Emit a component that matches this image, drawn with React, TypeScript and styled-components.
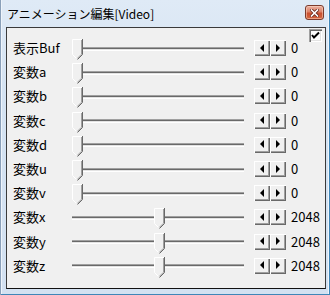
import React from "react";
import styled, { createGlobalStyle } from "styled-components";

const GlobalStyle = createGlobalStyle`
  html, body { margin: 0; padding: 0; background: #ffffff; }
  body { font-family: "Noto Sans CJK JP", "Noto Sans", sans-serif; }
  * { box-sizing: border-box; }
`;

const Window = styled.div`
  width: 330px;
  height: 295px;
  display: flex;
  flex-direction: column;
  background: linear-gradient(#dfeaf6, #d5e3f2 30%, #d3e1f1);
  box-shadow: inset 1px 0 0 #8aa0b9, inset -1px 0 0 #3f86b8, inset 0 -1px 0 #3f86b8,
    inset 2px 0 0 #eef4fb, inset -2px 0 0 #eef4fb;
`;

const TitleBar = styled.div`
  height: 27px;
  flex: none;
  display: flex;
  align-items: flex-start;
  justify-content: space-between;
  padding: 0 6px 0 7px;
`;

const Title = styled.span`
  font-size: 12px;
  line-height: 16px;
  margin-top: 6px;
  color: #000;
  white-space: nowrap;
`;

const CloseButton = styled.div`
  width: 19px;
  height: 15px;
  margin-top: 5px;
  border: 1px solid #7b3a2c;
  border-radius: 3px;
  background: linear-gradient(#eab0a2, #dc8268 45%, #c94f30 55%, #d5663f);
  box-shadow: inset 0 0 0 1px rgba(255, 220, 200, 0.5);
  display: flex;
  align-items: center;
  justify-content: center;
`;

const Client = styled.div`
  position: relative;
  height: 262px;
  margin: 0 4px 6px 6px;
  border: 1px solid #3a3a3a;
  border-bottom-color: #111;
  background: #f0f0f0;
  padding: 8px 0 0 6px;
  display: flex;
  flex-direction: column;
`;

const CheckBox = styled.div`
  position: absolute;
  top: 1px;
  right: 3px;
  width: 13px;
  height: 13px;
  background: #fff;
  box-shadow: inset 1px 1px 0 #a0a0a0, inset 2px 2px 0 #696969,
    inset -1px -1px 0 #ffffff, inset -2px -2px 0 #e3e3e3;
  display: flex;
  align-items: center;
  justify-content: center;
`;

const Row = styled.div`
  height: 24.2px;
  flex: none;
  display: flex;
  align-items: center;
`;

const Label = styled.span`
  width: 59px;
  flex: none;
  font-size: 13px;
  line-height: 16px;
  color: #000;
  white-space: nowrap;
`;

const Slider = styled.div`
  position: relative;
  width: 172px;
  height: 100%;
  flex: none;
  display: flex;
  align-items: center;
  padding-top: 1px;
`;

const Track = styled.div`
  width: 100%;
  height: 4px;
  border-top: 1px solid #a0a0a0;
  border-bottom: 1px solid #ffffff;
  background: linear-gradient(#696969 50%, #e3e3e3 50%);
`;

const ThumbBox = styled.div`
  position: absolute;
  top: 3px;
  width: 11px;
  height: 21px;
`;

const Spin = styled.div`
  display: flex;
  height: 16px;
  margin-left: 10px;
  flex: none;
`;

const SpinButton = styled.div`
  width: 16px;
  height: 16px;
  background: #f0f0f0;
  box-shadow: inset 1px 1px 0 #ffffff, inset -1px -1px 0 #696969, inset -2px -2px 0 #a0a0a0;
  display: flex;
  align-items: center;
  justify-content: center;
  padding-right: 1px;
  padding-bottom: 1px;
`;

const Value = styled.span`
  margin-left: 5px;
  font-size: 13px;
  line-height: 16px;
  color: #000;
`;

const Thumb = () => (
  <svg width="11" height="21" viewBox="0 0 11 21">
    <polygon points="0,0 11,0 11,15.5 5.5,21 0,15.5" fill="#f0f0f0" />
    <polyline points="0.5,15.5 0.5,0.5 10,0.5" fill="none" stroke="#ffffff" strokeWidth="1" />
    <polyline points="0.5,15.5 5.5,20.5" fill="none" stroke="#ffffff" strokeWidth="1" />
    <polyline points="9.5,1 9.5,15.2 5.2,19.5" fill="none" stroke="#a0a0a0" strokeWidth="1" />
    <polyline points="10.5,0 10.5,15.5 5.5,20.5" fill="none" stroke="#696969" strokeWidth="1" />
  </svg>
);

const Arrow = ({ dir }: { dir: "left" | "right" }) => (
  <svg width="4" height="8" viewBox="0 0 4 8">
    {dir === "left" ? (
      <polygon points="4,0 4,8 0,4" fill="#000" />
    ) : (
      <polygon points="0,0 0,8 4,4" fill="#000" />
    )}
  </svg>
);

type Param = { label: string; value: number };

const params: Param[] = [
  { label: "表示Buf", value: 0 },
  { label: "変数a", value: 0 },
  { label: "変数b", value: 0 },
  { label: "変数c", value: 0 },
  { label: "変数d", value: 0 },
  { label: "変数u", value: 0 },
  { label: "変数v", value: 0 },
  { label: "変数x", value: 2048 },
  { label: "変数y", value: 2048 },
  { label: "変数z", value: 2048 },
];

export default function App() {
  return (
    <>
      <GlobalStyle />
      <Window>
        <TitleBar>
          <Title>アニメーション編集[Video]</Title>
          <CloseButton>
            <svg width="9" height="8" viewBox="0 0 9 8">
              <path d="M1.5 1 L7.5 7 M7.5 1 L1.5 7" stroke="#6b2a1c" strokeWidth="3.2" strokeLinecap="square" />
              <path d="M1.5 1 L7.5 7 M7.5 1 L1.5 7" stroke="#ffffff" strokeWidth="1.6" strokeLinecap="square" />
            </svg>
          </CloseButton>
        </TitleBar>
        <Client>
          <CheckBox>
            <svg width="9" height="9" viewBox="0 0 9 9">
              <polyline points="1,4 3,6.5 8,1.5" fill="none" stroke="#000" strokeWidth="2" />
            </svg>
          </CheckBox>
          {params.map((p) => (
            <Row key={p.label}>
              <Label>{p.label}</Label>
              <Slider>
                <Track />
                <ThumbBox style={{ left: `${(p.value / 4096) * 164}px` }}>
                  <Thumb />
                </ThumbBox>
              </Slider>
              <Spin>
                <SpinButton>
                  <Arrow dir="left" />
                </SpinButton>
                <SpinButton>
                  <Arrow dir="right" />
                </SpinButton>
              </Spin>
              <Value>{p.value}</Value>
            </Row>
          ))}
        </Client>
      </Window>
    </>
  );
}
